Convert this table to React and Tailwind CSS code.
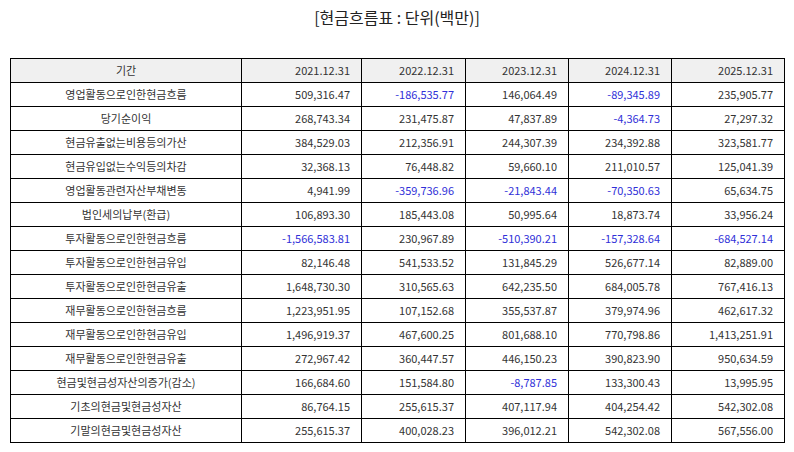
import React from 'react';

const years = ['2021.12.31', '2022.12.31', '2023.12.31', '2024.12.31', '2025.12.31'];

const rows = [
  ['영업활동으로인한현금흐름', '509,316.47', '-186,535.77', '146,064.49', '-89,345.89', '235,905.77'],
  ['당기순이익', '268,743.34', '231,475.87', '47,837.89', '-4,364.73', '27,297.32'],
  ['현금유출없는비용등의가산', '384,529.03', '212,356.91', '244,307.39', '234,392.88', '323,581.77'],
  ['현금유입없는수익등의차감', '32,368.13', '76,448.82', '59,660.10', '211,010.57', '125,041.39'],
  ['영업활동관련자산부채변동', '4,941.99', '-359,736.96', '-21,843.44', '-70,350.63', '65,634.75'],
  ['법인세의납부(환급)', '106,893.30', '185,443.08', '50,995.64', '18,873.74', '33,956.24'],
  ['투자활동으로인한현금흐름', '-1,566,583.81', '230,967.89', '-510,390.21', '-157,328.64', '-684,527.14'],
  ['투자활동으로인한현금유입', '82,146.48', '541,533.52', '131,845.29', '526,677.14', '82,889.00'],
  ['투자활동으로인한현금유출', '1,648,730.30', '310,565.63', '642,235.50', '684,005.78', '767,416.13'],
  ['재무활동으로인한현금흐름', '1,223,951.95', '107,152.68', '355,537.87', '379,974.96', '462,617.32'],
  ['재무활동으로인한현금유입', '1,496,919.37', '467,600.25', '801,688.10', '770,798.86', '1,413,251.91'],
  ['재무활동으로인한현금유출', '272,967.42', '360,447.57', '446,150.23', '390,823.90', '950,634.59'],
  ['현금및현금성자산의증가(감소)', '166,684.60', '151,584.80', '-8,787.85', '133,300.43', '13,995.95'],
  ['기초의현금및현금성자산', '86,764.15', '255,615.37', '407,117.94', '404,254.42', '542,302.08'],
  ['기말의현금및현금성자산', '255,615.37', '400,028.23', '396,012.21', '542,302.08', '567,556.00'],
];

const font = { fontFamily: '"Noto Sans CJK KR", "Noto Sans", sans-serif' };

export default function App() {
  return (
    <div className="w-[794px] h-[452px] bg-white text-[#222]" style={font}>
      <h1 className="pt-[5px] h-[58px] text-center text-[16px] leading-[24px] text-[#222]">
        [현금흐름표 : 단위(백만)]
      </h1>

      <div className="px-[10px]">
        <table className="w-[774px] table-fixed border-collapse border border-black text-[11px] text-[#333]">
          <colgroup>
            <col className="w-[231px]" />
            <col className="w-[120px]" />
            <col className="w-[104px]" />
            <col className="w-[103px]" />
            <col className="w-[103px]" />
            <col className="w-[113px]" />
          </colgroup>
          <thead>
            <tr className="h-[24px] bg-[#f0f0f0]">
              <th className="border border-black font-normal text-center">기간</th>
              {years.map((y) => (
                <th key={y} className="border border-black font-normal text-right pr-[11px]">{y}</th>
              ))}
            </tr>
          </thead>
          <tbody>
            {rows.map((r) => (
              <tr key={r[0]} className="h-[24px]">
                <td className="border border-black text-center">{r[0]}</td>
                {r.slice(1).map((v, i) => (
                  <td
                    key={i}
                    className={
                      v.startsWith('-')
                        ? 'border border-black text-right pr-[11px] text-[#3030d8]'
                        : 'border border-black text-right pr-[11px]'
                    }
                  >
                    {v}
                  </td>
                ))}
              </tr>
            ))}
          </tbody>
        </table>
      </div>
    </div>
  );
}
